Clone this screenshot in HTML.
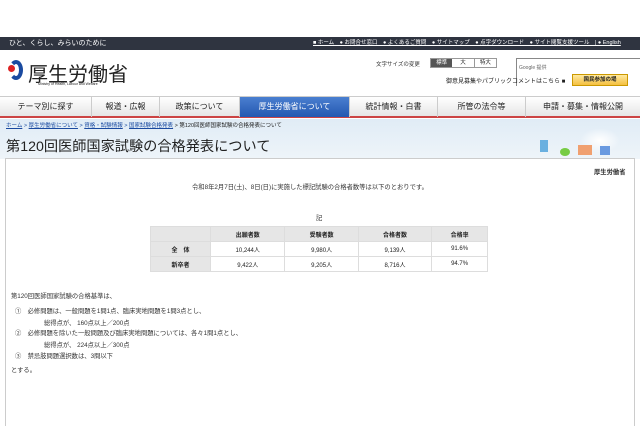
<!DOCTYPE html>
<html><head><meta charset="utf-8"><style>
*{margin:0;padding:0;box-sizing:border-box}
body{width:640px;height:426px;overflow:hidden;background:#fff;font-family:"Liberation Sans","Noto Sans CJK JP",sans-serif;color:#222;position:relative}
.a{position:absolute;white-space:nowrap}
#top{top:37px;left:0;width:640px;height:13px;background:#2f3440;color:#fff;font-size:7px;line-height:13px}
#nav{top:96px;left:0;width:640px;height:22px;background:linear-gradient(#fff,#e6e6e6);border-top:1px solid #ccc;border-bottom:2px solid #c44}
#nav div{position:absolute;top:0;height:20px;font-size:8px;line-height:20px;text-align:center;border-right:1px solid #ccc}
#sky{top:119px;left:0;width:640px;height:40px;background:linear-gradient(#e0ecf6,#eef4f9)}
#box{top:158px;left:5px;width:630px;height:268px;border:1px solid #ccc;border-bottom:none;background:#fff}
table{border-collapse:collapse;position:absolute;left:150px;top:226px;width:338px;font-size:6px}
td{border:1px solid #ddd;height:15px;text-align:center}
.g{background:#e6e6e6;font-weight:bold}
.t{font-size:6.3px;color:#333}
</style></head><body>
<div class="a" id="top"><span style="margin-left:9px">ひと、くらし、みらいのために</span>
<span class="a" style="left:313px;top:0;font-size:5.5px;text-decoration:underline">■ ホーム　● お問合せ窓口　● よくあるご質問　● サイトマップ　● 点字ダウンロード　● サイト閲覧支援ツール　| ● English</span></div>
<div class="a" style="left:9px;top:60px;width:14px;height:20px;border:4px solid #1a4aa0;border-left-color:transparent;border-radius:50%"></div>
<div class="a" style="left:8px;top:65px;width:7px;height:7px;background:#d22;border-radius:50%"></div>
<div class="a" style="left:28px;top:58px;font-size:20px;color:#222">厚生労働省</div>
<div class="a" style="left:38px;top:82px;font-size:3.5px">Ministry of Health, Labour and Welfare</div>
<div class="a t" style="left:376px;top:60px;font-size:5.5px">文字サイズの変更</div>
<div class="a" style="left:430px;top:58px;width:67px;height:10px;border:1px solid #999;font-size:5.5px;line-height:8px;display:flex"><span style="background:#555;color:#fff;flex:1;text-align:center">標準</span><span style="flex:1;text-align:center">大</span><span style="flex:1;text-align:center;border-left:1px solid #999">特大</span></div>
<div class="a" style="left:516px;top:58px;width:124px;height:28px;border-left:1px solid #888;border-top:1px solid #888;font-size:5px;color:#666;padding:5px 2px">Google 提供</div>
<div class="a" style="left:446px;top:76px;font-size:6px">御意見募集やパブリックコメントはこちら ■</div>
<div class="a" style="left:572px;top:74px;width:56px;height:12px;background:linear-gradient(#ffe9a0,#f5c040);border:1px solid #c90;font-size:5.5px;line-height:10px;text-align:center;font-weight:bold">国民参加の場</div>
<div class="a" id="nav">
<div style="left:0;width:92px">テーマ別に探す</div><div style="left:92px;width:68px">報道・広報</div><div style="left:160px;width:80px">政策について</div>
<div style="left:240px;width:110px;background:linear-gradient(#4a7fd0,#2458b0);color:#fff">厚生労働省について</div>
<div style="left:350px;width:88px">統計情報・白書</div><div style="left:438px;width:88px">所管の法令等</div><div style="left:526px;width:114px;border:none">申請・募集・情報公開</div></div>
<div class="a" id="sky"></div>
<div class="a" style="left:580px;top:128px;width:40px;height:25px;background:radial-gradient(#fff,transparent 70%)"></div>
<div class="a" style="left:540px;top:140px;width:8px;height:12px;background:#6ab0e0"></div>
<div class="a" style="left:578px;top:145px;width:14px;height:10px;background:#f0a070"></div>
<div class="a" style="left:600px;top:146px;width:10px;height:9px;background:#6a9ae0"></div>
<div class="a" style="left:560px;top:148px;width:10px;height:8px;background:#7c4;border-radius:50%"></div>
<div class="a" style="left:6px;top:121px;font-size:5.5px;color:#1a4aa0"><u>ホーム</u> &gt; <u>厚生労働省について</u> &gt; <u>資格・試験情報</u> &gt; <u>国家試験合格発表</u> <span style="color:#222">&gt; 第120回医師国家試験の合格発表について</span></div>
<div class="a" style="left:6px;top:136px;font-size:14.2px">第120回医師国家試験の合格発表について</div>
<div class="a" id="box"></div>
<div class="a t" style="left:594px;top:167px;font-weight:bold">厚生労働省</div>
<div class="a t" style="left:192px;top:182px">令和8年2月7日(土)、8日(日)に実施した標記試験の合格者数等は以下のとおりです。</div>
<div class="a t" style="left:316px;top:213px">記</div>
<table>
<tr><td class="g" style="width:60px"></td><td class="g">出願者数</td><td class="g">受験者数</td><td class="g">合格者数</td><td class="g">合格率</td></tr>
<tr><td class="g">全　体</td><td>10,244人</td><td>9,980人</td><td>9,139人</td><td>91.6%</td></tr>
<tr><td class="g">新卒者</td><td>9,422人</td><td>9,205人</td><td>8,716人</td><td>94.7%</td></tr>
</table>
<div class="a t" style="left:11px;top:291px">第120回医師国家試験の合格基準は、</div>
<div class="a t" style="left:15px;top:306px">①　必修問題は、一般問題を1問1点、臨床実地問題を1問3点とし、</div>
<div class="a t" style="left:44px;top:318px">総得点が、 160点以上／200点</div>
<div class="a t" style="left:15px;top:328px">②　必修問題を除いた一般問題及び臨床実地問題については、各々1問1点とし、</div>
<div class="a t" style="left:44px;top:340px">総得点が、 224点以上／300点</div>
<div class="a t" style="left:15px;top:351px">③　禁忌肢問題選択数は、3問以下</div>
<div class="a t" style="left:11px;top:365px">とする。</div>
</body></html>
